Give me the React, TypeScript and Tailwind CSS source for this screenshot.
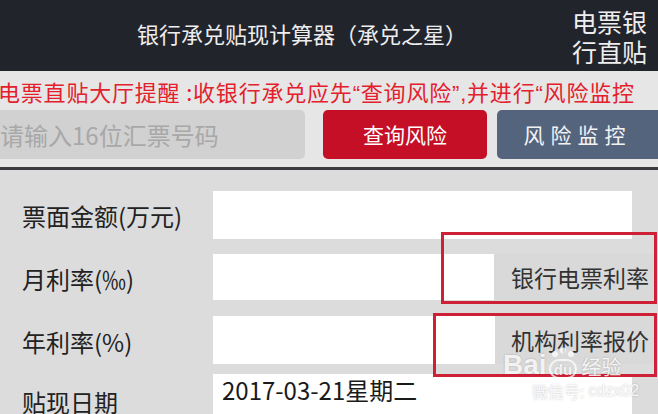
import React from "react";

const cjk = { fontFamily: '"Noto Sans CJK SC", "Noto Sans", sans-serif' };
const latin = { fontFamily: '"Liberation Sans", Arial, sans-serif' };

function FieldLabel({ children, className = "" }: { children: React.ReactNode; className?: string }) {
  return (
    <div className={`w-[213px] shrink-0 pl-[22px] text-[24px] text-[#222] ${className}`}>
      {children}
    </div>
  );
}

function RateButton({ label }: { label: string }) {
  return (
    <div className="flex flex-1 items-center justify-end bg-[#d9d9d9] pr-[6px] text-[23px] text-[#333]">
      {label}
    </div>
  );
}

function Q({ children }: { children: React.ReactNode }) {
  return <span style={latin}>{children}</span>;
}

function Watermark() {
  return (
    <div className="pointer-events-none absolute left-[503px] top-[347px] flex flex-col items-start text-white/85 [text-shadow:0_0_2px_rgba(0,0,0,0.25)]">
      <div className="flex items-end leading-none">
        <span className="text-[28px] font-bold" style={latin}>
          Bai
        </span>
        <svg width="30" height="32" viewBox="0 0 30 32" className="mx-[1px] opacity-90">
          <circle cx="7" cy="7" r="3" fill="currentColor" />
          <circle cx="15" cy="3.5" r="3" fill="currentColor" />
          <circle cx="23" cy="7" r="3" fill="currentColor" />
          <rect x="2" y="13" width="26" height="18" rx="9" fill="none" stroke="currentColor" strokeWidth="2" />
          <text x="15" y="28" textAnchor="middle" fontSize="15" fontWeight="700" fill="currentColor" fontFamily="Liberation Sans">
            du
          </text>
        </svg>
        <span className="ml-[3px] pb-[2px] text-[20px]">经验</span>
      </div>
      <div className="mt-[3px] flex items-center gap-[4px] pl-[8px] text-[16px] leading-none">
        <span className="inline-block h-[17px] w-[17px] rounded-full border-2 border-white/70" />
        微信号: <span style={latin}>cdzx02</span>
      </div>
    </div>
  );
}

export default function App() {
  return (
    <div className="relative h-[414px] w-[658px] overflow-hidden bg-[#dcdcdc]" style={cjk}>
      {/* header */}
      <div className="flex h-[71px] items-center bg-[#22242c] text-[#eeeeee]">
        <div className="flex-1 pb-[5px] pl-[137px] text-[22px]">银行承兑贴现计算器（承兑之星）</div>
        <div className="w-[86px] shrink-0 text-[25px] leading-[30px]">
          电票银
          <br />
          行直贴
        </div>
      </div>

      {/* notice + query */}
      <div className="bg-[#e6e6e6]">
        <div className="-ml-[2px] h-[39px] whitespace-nowrap pt-[6px] text-[22px] leading-[28px] tracking-[0.8px] text-[#e3202c]">
          电票直贴大厅提醒 :收银行承兑应先<Q>“</Q>查询风险<Q>”,</Q>并进行<Q>“</Q>风险监控
        </div>
        <div className="flex h-[49px] items-stretch">
          <div className="flex w-[305px] items-center rounded-r-[5px] bg-[#d1d1d1] text-[24px] text-[#a8a8a8]">
            请输入16位汇票号码
          </div>
          <div className="ml-[18px] flex w-[164px] items-center justify-center rounded-[5px] bg-[#c50f26] text-[21px] text-white">
            查询风险
          </div>
          <div className="ml-[10px] flex flex-1 items-center justify-center rounded-l-[5px] bg-[#54647d] text-[21px] tracking-[6px] text-[#f2f2f2]">
            风险监控
          </div>
        </div>
        <div className="h-[8px]" />
      </div>
      <div className="h-[3px] bg-[#3a3b3e]" />

      {/* form */}
      <div className="flex flex-col pt-[21px]">
        <div className="flex h-[48px] items-center">
          <FieldLabel className="pt-[2px]">票面金额(万元)</FieldLabel>
          <div className="h-full w-[419px] bg-white" />
        </div>
        <div className="mt-[15px] flex h-[46px] items-stretch">
          <FieldLabel className="flex items-center pt-[4px]">月利率(‰)</FieldLabel>
          <div className="w-[281px] bg-white" />
          <RateButton label="银行电票利率" />
          <div className="w-[3px]" />
        </div>
        <div className="mt-[16px] flex h-[48px] items-stretch">
          <FieldLabel className="flex items-center pt-[4px]">年利率(%)</FieldLabel>
          <div className="w-[282px] bg-white" />
          <RateButton label="机构利率报价" />
          <div className="w-[3px]" />
        </div>
        <div className="mt-[10px] flex h-[48px] items-stretch">
          <FieldLabel className="flex items-start pt-[10px]">贴现日期</FieldLabel>
          <div className="w-[419px] bg-white pl-[9px] pt-[1px] text-[24px] leading-[30px] text-[#1a1a1a]">
            2017-03-21星期二
          </div>
        </div>
      </div>

      {/* highlight boxes drawn over the screenshot */}
      <div className="pointer-events-none absolute left-[441px] top-[232px] h-[72px] w-[216px] border-[3px] border-[#cf2136]" />
      <div className="pointer-events-none absolute left-[433px] top-[313px] h-[64px] w-[224px] border-[3px] border-[#cf2136]" />

      <Watermark />
    </div>
  );
}
